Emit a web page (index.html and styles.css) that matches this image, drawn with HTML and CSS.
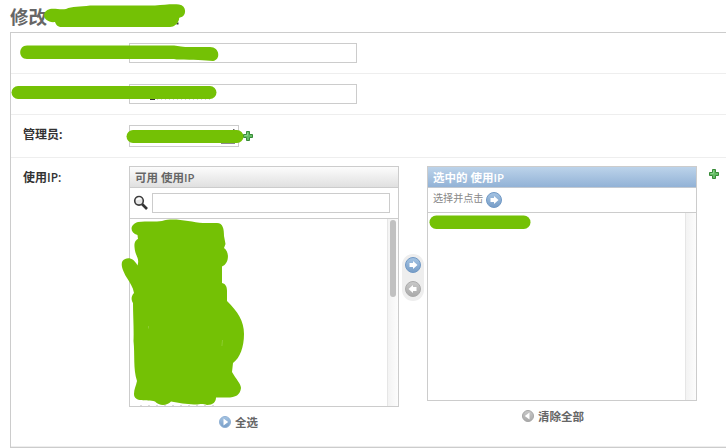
FILE: index.html
```html
<!DOCTYPE html>
<html lang="zh-CN">
<head>
<meta charset="utf-8">
<title>修改</title>
<link rel="stylesheet" href="styles.css">
</head>
<body>
<svg class="defs" width="0" height="0">
  <defs>
    <linearGradient id="blue" x2="0" y2="1"><stop stop-color="#a5c4e3"/><stop offset="1" stop-color="#779dc7"/></linearGradient>
    <linearGradient id="grey" x2="0" y2="1"><stop stop-color="#c9c9c9"/><stop offset="1" stop-color="#a9a9a9"/></linearGradient>
    <symbol id="plus" viewBox="0 0 10 10"><path d="M3.5.5h3v3h3v3h-3v3h-3v-3h-3v-3h3z" fill="#65bd65" stroke="#388b38"/><path d="M4.5 1.5v3h-3" fill="none" stroke="#8bd58b"/></symbol>
    <symbol id="arrow" viewBox="0 0 16 16"><path d="M4.500 6H8V4l4.500 4L8 12v-2H4.500z" fill="#fff"/></symbol>
  </defs>
</svg>
<h1>修改</h1>
<form class="module">
  <div class="row"><label></label><input class="text" type="text"></div>
  <div class="row"><label></label><input class="text" type="text"></div>
  <div class="row manager"><label>管理员:</label><span class="select"></span><svg class="plus"><use href="#plus"/></svg></div>
  <div class="row addresses">
    <label>使用<span class="latin">IP:</span></label>
    <div class="selector">
      <section class="available">
        <div class="box">
          <h2>可用 使用<span class="latin">IP</span></h2>
          <div class="filter">
            <svg width="16" height="16" viewBox="0 0 16 16"><path d="M9 9l5 5" stroke="#333" stroke-width="2.700"/><circle cx="6" cy="5.800" r="4.300" fill="#e6e6e6" stroke="#3d3d3d" stroke-width="1.600"/><path d="M3 5.500a3 3 0 0 1 5.500-1.500z" fill="#fff"/></svg>
            <input type="text">
          </div>
          <div class="list"><div class="track"><i></i></div></div>
        </div>
        <a class="all"><svg width="12" height="12" viewBox="0 0 12 12"><circle cx="6" cy="6" r="5.500" fill="url(#blue)" stroke="#8fb0d4"/><path d="M4.500 2.500v7L9.200 6z" fill="#fff"/></svg>全选</a>
      </section>
      <div class="chooser">
        <svg width="16" height="16" viewBox="0 0 16 16"><circle cx="8" cy="8" r="7.500" fill="url(#blue)" stroke="#7199c5"/><use href="#arrow"/></svg>
        <svg width="16" height="16" viewBox="0 0 16 16"><circle cx="8" cy="8" r="7.500" fill="url(#grey)" stroke="#aaa"/><use href="#arrow" transform="translate(16) scale(-1 1)"/></svg>
      </div>
      <section class="chosen">
        <div class="box">
          <h2>选中的 使用<span class="latin">IP</span></h2>
          <p>选择并点击<svg width="16" height="16" viewBox="0 0 16 16"><circle cx="8" cy="8" r="7.500" fill="url(#blue)" stroke="#7199c5"/><use href="#arrow"/></svg></p>
          <div class="list"><div class="track"></div></div>
        </div>
        <a class="all"><svg width="12" height="12" viewBox="0 0 12 12"><circle cx="6" cy="6" r="5.500" fill="url(#grey)" stroke="#a5a5a5"/><path d="M7.500 2.500v7L2.800 6z" fill="#fff"/></svg>清除全部</a>
      </section>
    </div>
    <svg class="plus"><use href="#plus"/></svg>
  </div>
</form>
<svg class="marks" width="726" height="448" viewBox="0 0 726 448">
  <g fill="#333"><path d="M150 57h5v1.700h-5zM150 98h5v2h-5zM28 98h2v1h-2zM176.500 22.500h2v2h-2z"/><path d="M221 142.500h14v1.200h-14zM233 129h1.500v3H233z" fill="#666"/><path d="M157 98.800h54" stroke="#777" stroke-dasharray="1 3" fill="none"/></g>
  <g fill="#74c105">
    <path d="M50 9c5-1 10 1 16 0 6-3 14-2 24-3.500h65c9-.5 15-1.500 24-1 8 1 8 12 1 13-1 0-1 1-1 2-1 4-5 7.500-9 7.500H62c-4 0-6-2-7-5-6 1-11-3-11-6.500 0-3 2-5.500 6-6.500z"/>
    <path d="M27 45.500h145c6 0 8 1.500 16 1.500h22c10 0 11 13 3 14-8-1-20-1-34-1.500-4 0-5-.5-11-.5H27c-9 0-9-13.500 0-13.500z"/>
    <rect x="11.500" y="86" width="205" height="13" rx="6.500"/>
    <rect x="126.500" y="130" width="117" height="13" rx="6.500"/>
    <rect x="429.500" y="215.500" width="101" height="13.500" rx="6.700"/>
    <path d="M138 222C147 221 156 222 162 221C174 217 190 222 203 223H217C223 223 224 229 224 236L225.500 244L224 248C230 252 229 264 222 266.500V283C226 284 227 287 227 291V301C238 312 244 321 244 334C244 347 240 358 233 363L232 372C236 379 241 384 241 388C240 395 236 397.500 227 397.500H216C216 402 213 405 207 405C201 403 199 405 194 404.500C186 404 179 403 171 401.500C167 406 159 406 155 401.500C147 399 134 403 134 394C134 389 136 386 137 381C133 369 135 354 133.500 341C134 330 133 315 133 303C131 300 131 296 134 293C133 287 130 283 127 278C124 273 120 265 122.500 261C127 256 134 258 137.500 265.500C140 258 135 256 134.500 247C134 242 136 240 138 239L137.500 235C130 233 129 225 138 222Z"/>
  </g>
  <path d="M148.500 326v2.500M222.500 340l-.6 6" stroke="#a5d75b" stroke-width=".5"/>
  <path d="M140 405.500h80" stroke="#ddd" stroke-dasharray="2 6"/>
</svg>
</body>
</html>
```
FILE: styles.css
```css
* { box-sizing: border-box; }
body {
  position: relative;
  width: 726px;
  height: 448px;
  margin: 0;
  padding-left: 10px;
  overflow: hidden;
  background: #fff;
  color: #333;
  font: 12px "Open Sans", "Noto Sans CJK SC", sans-serif;
}
.defs { position: absolute; }
svg { display: block; flex: none; }
h1 { height: 32px; margin: 0; padding-top: 4px; color: #666; font-size: 18.5px; line-height: 25px; }
.module { height: 416px; border: 1px solid #ccc; border-right: 0; }
.row { display: flex; height: 41px; padding: 10px 0 0 12px; border-bottom: 1px solid #eee; }
.row label { flex: 0 0 106px; font-weight: bold; line-height: 20px; }
.latin { font-weight: 600; }
input { border: 1px solid #ccc; background: #fff; outline: 0; }
.text { width: 228px; height: 20px; }
.manager { height: 43px; }
.select { width: 110px; height: 22px; border: 1px solid #ccc; }
.plus { width: 10px; height: 10px; }
.manager .plus { margin: 6px 0 0 4px; }
.addresses { height: 289px; padding-top: 8px; }
.addresses > label { line-height: 24px; }
.addresses > .plus { margin: 3px 0 0 12px; }
.selector { display: flex; width: 568px; }
.available, .chosen { width: 270px; }
.box { display: flex; flex-direction: column; height: 241px; border: 1px solid #ccc; }
.chosen .box { height: 235px; }
h2 { flex: 0 0 21px; min-height: 0; margin: 0; padding-left: 5px; border-bottom: 1px solid #ccc; background: linear-gradient(#fcfcfc, #e0e0e0); color: #666; font-size: 11.5px; line-height: 21px; }
.chosen h2 { border-color: #c2c9d1; background: linear-gradient(#bcd3ea, #92b2d6); color: #fff; }
.filter { display: flex; flex: 0 0 31px; padding: 5px 0 0 3px; border-bottom: 1px solid #ccc; }
.filter svg { margin-top: 2px; }
.filter input { width: 238px; height: 20px; margin-left: 3px; }
.chosen p { display: flex; flex: 0 0 25px; margin: 0; padding-left: 5px; border-bottom: 1px solid #ccc; color: #888; font-size: 10.1px; line-height: 21px; }
.chosen p svg { margin: 4px 0 0 3px; }
.list { display: flex; flex: 1; justify-content: flex-end; }
.track { width: 11px; padding: 1px 0 0 2px; border-left: 1px solid #e6e6e6; background: linear-gradient(90deg, #f3f3f3, #fcfcfc); }
.track i { display: block; width: 6px; height: 77px; border-radius: 3px; background: #c1c1c1; }
.chooser { display: flex; flex-direction: column; gap: 8px; width: 22px; height: 47px; margin: 88px 3px 0; padding: 3px; border-radius: 11px; background: #eee; }
.all { display: flex; align-items: center; justify-content: center; gap: 4px; height: 20px; margin-top: 5px; color: #666; font-size: 11.5px; font-weight: bold; }
.available .all { padding-right: 51px; }
.chosen .all { padding-right: 18px; }
.marks { position: absolute; top: 0; left: 0; pointer-events: none; }
```
